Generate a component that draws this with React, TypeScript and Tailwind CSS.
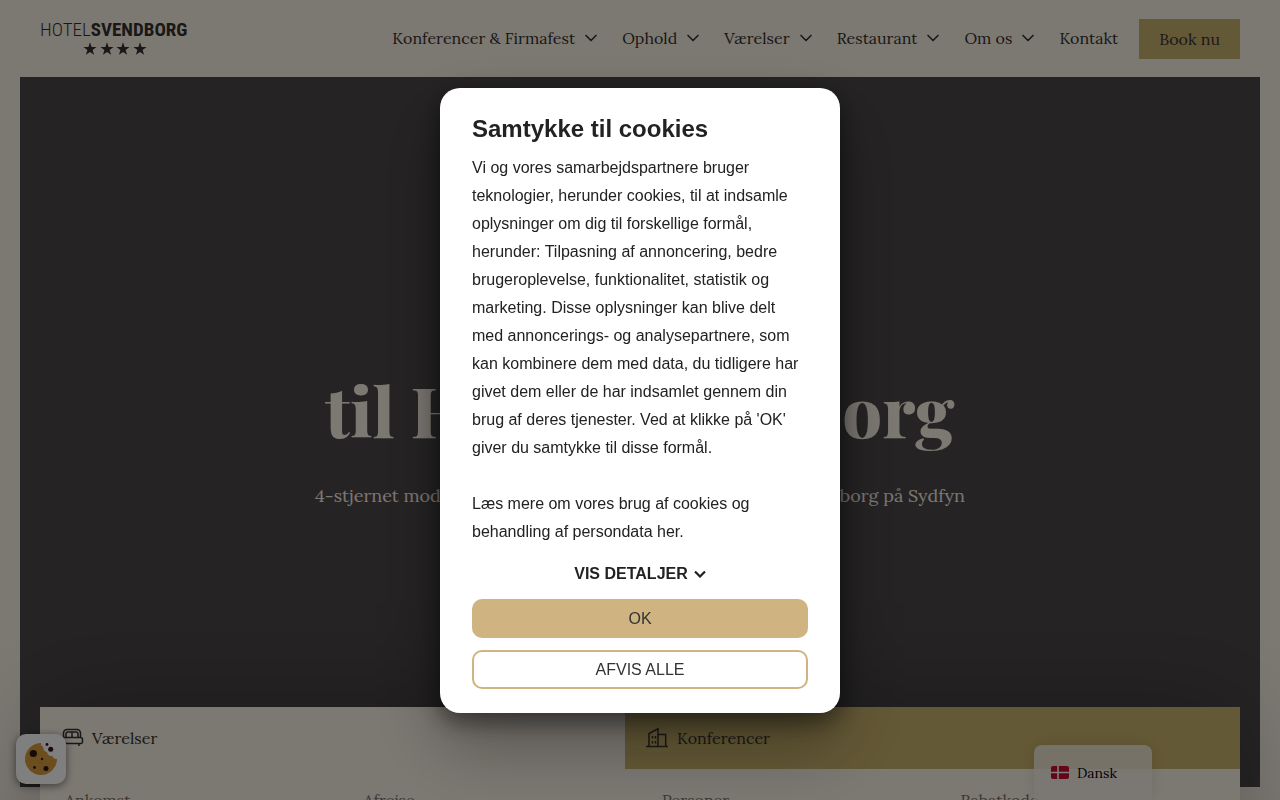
import { ChevronDown } from "lucide-react";

const navItems = [
  { label: "Konferencer & Firmafest", menu: true },
  { label: "Ophold", menu: true },
  { label: "Værelser", menu: true },
  { label: "Restaurant", menu: true },
  { label: "Om os", menu: true },
  { label: "Kontakt", menu: false },
];

const fields = ["Ankomst", "Afrejse", "Personer", "Rabatkode"];

function Star({ x }: { x: number }) {
  return (
    <path
      transform={`translate(${x} 27)`}
      d="M0 -6.8 L1.6 -2.1 L6.6 -2.1 L2.6 0.9 L4.1 5.8 L0 2.9 L-4.1 5.8 L-2.6 0.9 L-6.6 -2.1 L-1.6 -2.1 Z"
    />
  );
}

function Logo() {
  return (
    <a href="#" aria-label="Hotel Svendborg" className="flex w-[151px] flex-col gap-[3px] text-[#35302f]">
      <span className="flex h-[18px] items-center whitespace-nowrap font-['Roboto_Condensed','Liberation_Sans_Narrow','Roboto',sans-serif] text-[19px] leading-[18px]">
        <span className="font-light">HOTEL</span>
        <span className="font-bold">SVENDBORG</span>
      </span>
      <svg viewBox="0 20 151 14" className="h-3.5 w-[151px] fill-current" aria-hidden="true">
        <Star x={50} />
        <Star x={67} />
        <Star x={83} />
        <Star x={100} />
      </svg>
    </a>
  );
}

function BedIcon() {
  return (
    <svg viewBox="0 0 22 20" className="h-5 w-[22px]" fill="none" stroke="currentColor" strokeWidth="1.5" aria-hidden="true">
      <path d="M1.5 10V5A3.5 3.5 0 0 1 5 1.5h10A3.5 3.5 0 0 1 18.5 5v4.5" />
      <path d="M4 9.5V6a2 2 0 0 1 2-2h8a2 2 0 0 1 2 2v3.5M10 4v5.5" />
      <path d="M1 9.5h17.5a2 2 0 0 1 2 2V14a1.5 1.5 0 0 1-1.5 1.5H2.5A1.5 1.5 0 0 1 1 14zM17 15.5V18M3 15.5V18" />
    </svg>
  );
}

function BuildingIcon() {
  return (
    <svg viewBox="0 0 22 20" className="h-5 w-[22px] overflow-visible" fill="none" stroke="currentColor" strokeWidth="1.5" aria-hidden="true">
      <path d="M-1 18.5h22M2 18.5v-13L11 .8v17.7M11 6.5h7.7v12" />
      <path d="M5.5 8v2.5M8.5 8v2.5M5.5 13v2.5M8.5 13v2.5" />
    </svg>
  );
}

function CookieIcon() {
  return (
    <svg viewBox="0 0 32 32" className="size-8" aria-hidden="true">
      <path fill="#d99b3c" d="M16 0a16 16 0 1 0 16 16c-2 .3-4-.8-4.5-3-3 .5-5-1-5.5-4-2.8-.5-4-2.5-3.500-5C16.500 3.500 16 1.500 16 0z" />
      <g fill="#2e1410">
        <circle cx="8.3" cy="10.5" r="3.6" />
        <circle cx="25.7" cy="6.3" r="2.5" />
        <circle cx="22" cy="1.5" r="1.4" />
        <circle cx="17" cy="16" r="1.2" />
        <circle cx="9.5" cy="24.500" r="1.4" />
        <circle cx="21" cy="25.5" r="2.5" />
      </g>
    </svg>
  );
}

export default function App() {
  return (
    <div className="relative h-screen overflow-hidden bg-[#f9f1e5] font-['Lora','Liberation_Serif',serif] text-[#35312f]">
      <header className="flex h-[77px] items-center justify-between px-10">
        <Logo />
        <nav className="flex items-center gap-[21px]">
          {navItems.map((item) => (
            <a key={item.label} href="#" className="flex items-center gap-1.5 pb-0.5 text-base leading-6">
              {item.label}
              {item.menu && <ChevronDown className="size-5" strokeWidth={2} />}
            </a>
          ))}
          <a href="#" className="flex h-10 items-center bg-[#c9b26c] px-5 text-base">Book nu</a>
        </nav>
      </header>

      <main>
        <section className="mx-5 flex h-[calc(100vh-90px)] flex-col items-center bg-[#4b4749] pt-[286px] text-center text-[#f9f1e5]">
          <h1 className="font-['Playfair_Display','Liberation_Serif',serif] text-[70px] leading-[92px] font-extrabold">til Hotel Svendborg</h1>
          <p className="mt-[27px] text-lg leading-7">4-stjernet moderne hotel centralt beliggende i hjertet af Svendborg på Sydfyn</p>
        </section>

        <section className="relative mx-10 -mt-20 h-60 bg-[#f9f1e5] shadow-[0_0_100px_rgba(0,0,0,0.25)]">
          <div className="flex h-[62px] text-base">
            <button type="button" className="flex w-[585px] items-center gap-2 px-[22px]">
              <BedIcon />
              Værelser
            </button>
            <button type="button" className="flex flex-1 items-center gap-2 bg-[#c9b26c] px-[22px]">
              <BuildingIcon />
              Konferencer
            </button>
          </div>
          <div className="grid grid-cols-4 gap-x-11 px-[25px] pt-[19px] text-base leading-6 text-[#77706b]">
            {fields.map((field) => (
              <span key={field}>{field}</span>
            ))}
          </div>
        </section>
      </main>

      <button type="button" className="absolute right-32 bottom-0 flex h-[55px] w-[118px] items-center gap-2 rounded-t-lg bg-[#f5f1ea]/80 px-[17px] text-sm text-black shadow-[0_0_16px_rgba(0,0,0,0.1)]">
        <svg viewBox="0 0 18 13" className="h-[13px] w-[18px]" aria-hidden="true">
          <rect width="18" height="13" rx="2" fill="#c60c30" />
          <path d="M7 0v13M0 6.5h18" stroke="#fff" strokeWidth="1.6" />
        </svg>
        Dansk
      </button>

      <button type="button" aria-label="Cookies" className="absolute bottom-4 left-4 flex size-[50px] items-center justify-center rounded-[10px] bg-white shadow-[0_2px_8px_rgba(0,0,0,0.5)]">
        <CookieIcon />
      </button>

      <div className="fixed inset-0 flex items-center justify-center bg-black/50 font-['Liberation_Sans',Arial,sans-serif]">
        <div role="dialog" aria-labelledby="cookie-title" className="w-[400px] rounded-[20px] bg-white px-8 pt-6 pb-6 text-[#232122] shadow-[0_8px_24px_rgba(0,0,0,0.5),0_32px_68px_rgba(0,0,0,0.3)]">
          <h2 id="cookie-title" className="text-2xl leading-[34px] font-bold">Samtykke til cookies</h2>
          <p className="mt-2 text-base leading-7">
            Vi og vores samarbejdspartnere bruger teknologier, herunder cookies, til at indsamle oplysninger om dig til forskellige formål, herunder: Tilpasning af annoncering, bedre brugeroplevelse, funktionalitet, statistik og marketing. Disse oplysninger kan blive delt med annoncerings- og analysepartnere, som kan kombinere dem med data, du tidligere har givet dem eller de har indsamlet gennem din brug af deres tjenester. Ved at klikke på 'OK' giver du samtykke til disse formål.
          </p>
          <p className="mt-7 text-base leading-7">Læs mere om vores brug af cookies og behandling af persondata her.</p>
          <button type="button" className="mx-auto mt-4 flex h-[25px] items-center gap-1.5 text-base font-bold">
            VIS DETALJER
            <svg viewBox="0 0 12 8" className="h-2 w-3" fill="none" stroke="currentColor" strokeWidth="2.2" aria-hidden="true">
              <path d="M1 1.5l5 5 5-5" />
            </svg>
          </button>
          <button type="button" className="mt-3 h-[39px] w-full rounded-[10px] bg-[#cfb481] pt-0.5 text-base text-[#333]">OK</button>
          <button type="button" className="mt-3 h-[39px] w-full rounded-[10px] border-2 border-[#cfb481] bg-white pt-0.5 text-base text-[#333]">AFVIS ALLE</button>
        </div>
      </div>
    </div>
  );
}
